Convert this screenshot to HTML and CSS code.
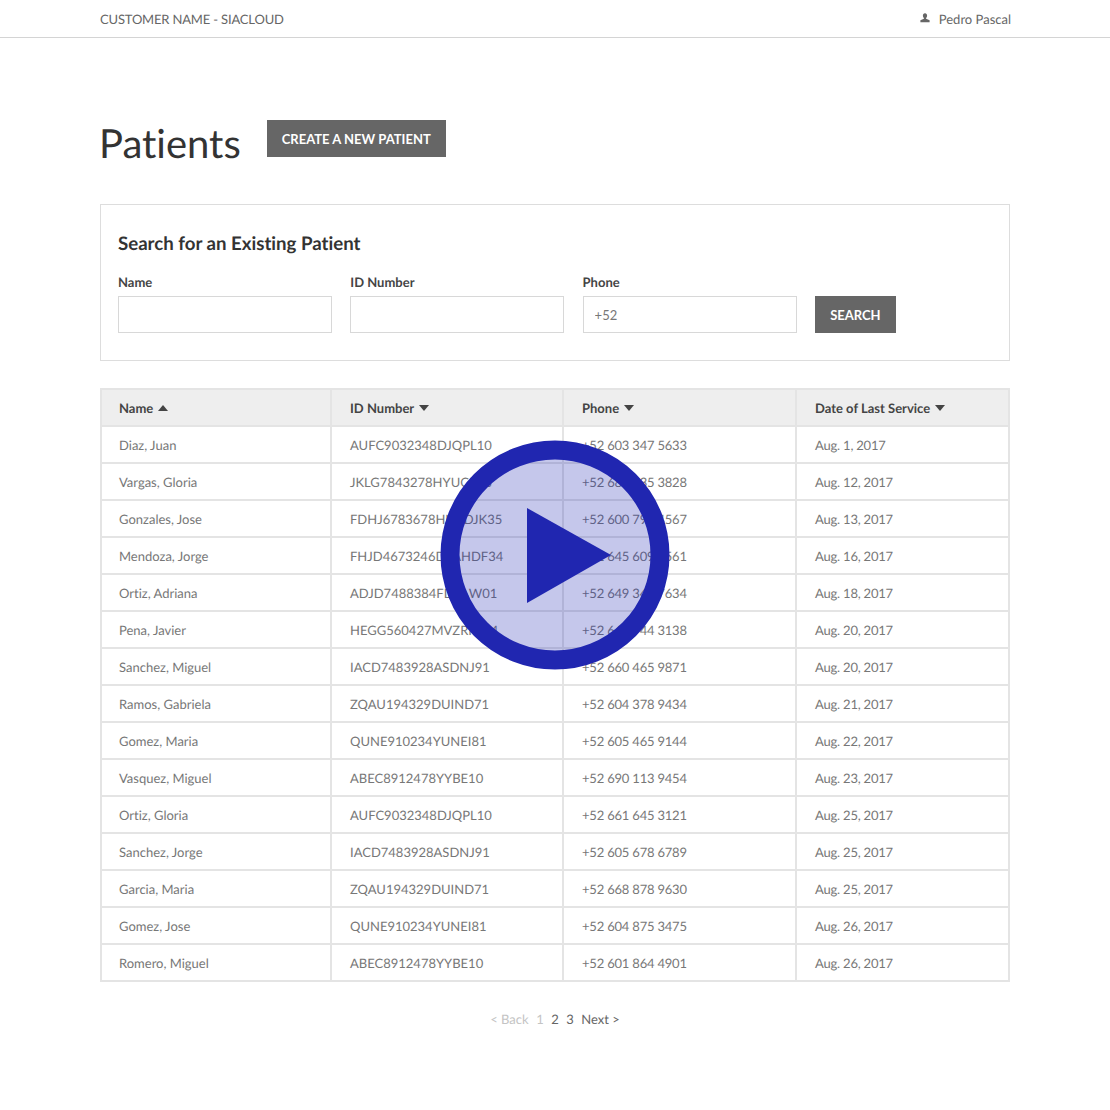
FILE: index.html
```html
<!doctype html>
<html lang="en">
<head>
<meta charset="UTF-8" />
<title>Patients</title>
<link rel="stylesheet" href="styles.css">
</head>
<body>
<header class="topbar">
  <div class="customer">CUSTOMER NAME - SIACLOUD</div>
  <div class="user">
    <svg class="user-icon" viewBox="0 0 10 10" width="10" height="10"><path d="M5 0.2C3.6 0.2 2.9 1.2 2.9 2.6C2.9 3.6 3.3 4.5 3.9 5L3.9 5.8L0.4 7.3L0.4 9.2L9.6 9.2L9.6 7.3L6.1 5.8L6.1 5C6.7 4.5 7.1 3.6 7.1 2.6C7.1 1.2 6.4 0.2 5 0.2Z"/></svg>
    <span>Pedro Pascal</span>
  </div>
</header>

<main class="page">
  <div class="title-row">
    <h1>Patients</h1>
    <button class="btn btn-create">CREATE A NEW PATIENT</button>
  </div>

  <section class="search-box">
    <h2>Search for an Existing Patient</h2>
    <div class="search-fields">
      <label class="field">Name<input type="text" /></label>
      <label class="field">ID Number<input type="text" /></label>
      <label class="field">Phone<input type="text" value="+52" /></label>
      <button class="btn btn-search">SEARCH</button>
    </div>
  </section>

  <table class="patients">
    <thead>
      <tr>
        <th>Name <span class="arrow up"></span></th>
        <th>ID Number <span class="arrow"></span></th>
        <th>Phone <span class="arrow"></span></th>
        <th>Date of Last Service <span class="arrow"></span></th>
      </tr>
    </thead>
    <tbody>
      <tr><td>Diaz, Juan</td><td>AUFC9032348DJQPL10</td><td class="num">+52 603 347 5633</td><td class="num">Aug. 1, 2017</td></tr>
      <tr><td>Vargas, Gloria</td><td>JKLG7843278HYUCKL8</td><td class="num">+52 680 935 3828</td><td class="num">Aug. 12, 2017</td></tr>
      <tr><td>Gonzales, Jose</td><td>FDHJ6783678HNBDJK35</td><td class="num">+52 600 792 4567</td><td class="num">Aug. 13, 2017</td></tr>
      <tr><td>Mendoza, Jorge</td><td>FHJD4673246DSAHDF34</td><td class="num">+52 645 609 4561</td><td class="num">Aug. 16, 2017</td></tr>
      <tr><td>Ortiz, Adriana</td><td>ADJD7488384FDSAW01</td><td class="num">+52 649 345 7634</td><td class="num">Aug. 18, 2017</td></tr>
      <tr><td>Pena, Javier</td><td>HEGG560427MVZRRL04</td><td class="num">+52 660 744 3138</td><td class="num">Aug. 20, 2017</td></tr>
      <tr><td>Sanchez, Miguel</td><td>IACD7483928ASDNJ91</td><td class="num">+52 660 465 9871</td><td class="num">Aug. 20, 2017</td></tr>
      <tr><td>Ramos, Gabriela</td><td>ZQAU194329DUIND71</td><td class="num">+52 604 378 9434</td><td class="num">Aug. 21, 2017</td></tr>
      <tr><td>Gomez, Maria</td><td>QUNE910234YUNEI81</td><td class="num">+52 605 465 9144</td><td class="num">Aug. 22, 2017</td></tr>
      <tr><td>Vasquez, Miguel</td><td>ABEC8912478YYBE10</td><td class="num">+52 690 113 9454</td><td class="num">Aug. 23, 2017</td></tr>
      <tr><td>Ortiz, Gloria</td><td>AUFC9032348DJQPL10</td><td class="num">+52 661 645 3121</td><td class="num">Aug. 25, 2017</td></tr>
      <tr><td>Sanchez, Jorge</td><td>IACD7483928ASDNJ91</td><td class="num">+52 605 678 6789</td><td class="num">Aug. 25, 2017</td></tr>
      <tr><td>Garcia, Maria</td><td>ZQAU194329DUIND71</td><td class="num">+52 668 878 9630</td><td class="num">Aug. 25, 2017</td></tr>
      <tr><td>Gomez, Jose</td><td>QUNE910234YUNEI81</td><td class="num">+52 604 875 3475</td><td class="num">Aug. 26, 2017</td></tr>
      <tr><td>Romero, Miguel</td><td>ABEC8912478YYBE10</td><td class="num">+52 601 864 4901</td><td class="num">Aug. 26, 2017</td></tr>
    </tbody>
  </table>

  <nav class="pager">
    <span class="off">&lt; Back</span>
    <span class="off">1</span>
    <a>2</a>
    <a>3</a>
    <a>Next &gt;</a>
  </nav>
</main>

<!-- video play button over the page -->
<div class="play">
  <svg viewBox="0 0 230 230" width="230" height="230">
    <circle cx="115" cy="115" r="105" class="play-ring" />
    <polygon points="87,68 171,115 87,163" class="play-arrow" />
  </svg>
</div>
</body>
</html>
```

FILE: styles.css
```css
body {
  margin: 0;
  background-color: #fff;
  color: #666;
  font-family: Lato, sans-serif;
  font-size: 14px;
  position: relative;
  text-rendering: geometricPrecision;
  font-variant-ligatures: none;
}

.topbar {
  display: flex;
  justify-content: space-between;
  align-items: center;
  height: 37px;
  padding: 0 99px 0 100px;
  border-bottom: 1px solid #d4d4d4;
  font-size: 13px;
  color: #666;
}

.customer {
  letter-spacing: -0.17px;
}

.user {
  display: flex;
  align-items: center;
  gap: 9px;
}

.user-icon {
  fill: #666;
  margin-top: -2px;
}

.page {
  width: 910px;
  margin-left: 100px;
}

.title-row {
  display: flex;
  align-items: flex-start;
  gap: 26px;
  padding-top: 81px;
}

h1 {
  margin: -1px 0 0 -1px;
  font-size: 40px;
  font-weight: 400;
  line-height: 50px;
  color: #333;
}

.btn {
  border: none;
  background-color: #666;
  color: #fff;
  font-family: Lato, sans-serif;
  font-size: 13px;
  font-weight: 700;
  height: 37px;
  padding: 0;
}

.btn-create {
  width: 179px;
  margin-top: 1px;
}

.search-box {
  margin-top: 36px;
  height: 155px;
  border: 1px solid #ddd;
  padding: 0 17px;
}

h2 {
  margin: 26px 0 0;
  font-size: 18.65px;
  font-weight: 700;
  line-height: 24px;
  color: #333;
}

.search-fields {
  display: flex;
  align-items: flex-end;
  gap: 18.3px;
  margin-top: 19px;
}

.field {
  display: flex;
  flex-direction: column;
  width: 214px;
  font-size: 13px;
  font-weight: 700;
  color: #444;
  line-height: 16px;
  gap: 6px;
}

.field input {
  box-sizing: border-box;
  width: 214px;
  height: 37px;
  border: 1px solid #d8d8d8;
  padding: 0 11px;
  font-family: Lato, sans-serif;
  font-size: 13px;
  color: #777;
  outline: none;
}

.btn-search {
  width: 81px;
}

.patients {
  width: 910px;
  margin-top: 27px;
  border-collapse: collapse;
  table-layout: fixed;
}

.patients th,
.patients td {
  box-sizing: border-box;
  border: 2px solid #e4e4e4;
  padding: 0 0 0 18px;
  height: 37px;
  text-align: left;
  font-size: 13px;
}

.patients th:first-child,
.patients td:first-child {
  padding-left: 17px;
}

.patients th {
  background-color: #eee;
  color: #444;
  font-weight: 700;
}

.patients td {
  color: #777;
}

.patients td.num {
  letter-spacing: -0.2px;
}

.patients th:nth-child(1) { width: 230px; }
.patients th:nth-child(2) { width: 232px; }
.patients th:nth-child(3) { width: 233px; }

.arrow {
  display: inline-block;
  width: 0;
  height: 0;
  margin-left: 2px;
  vertical-align: 2px;
  border-left: 5px solid transparent;
  border-right: 5px solid transparent;
  border-top: 6px solid #444;
}

.arrow.up {
  border-top: none;
  border-bottom: 6px solid #444;
}

.pager {
  display: flex;
  justify-content: center;
  gap: 7.5px;
  margin-top: 28px;
  padding-bottom: 74px;
  font-size: 13px;
  line-height: 18px;
  color: #666;
}

.pager .off {
  color: #c4c4c4;
}

.play {
  position: absolute;
  left: 440px;
  top: 440px;
  width: 230px;
  height: 230px;
}

.play-ring {
  fill: rgba(32, 38, 176, 0.26);
  stroke: #2026b0;
  stroke-width: 19;
}

.play-arrow {
  fill: #2026b0;
}
```
